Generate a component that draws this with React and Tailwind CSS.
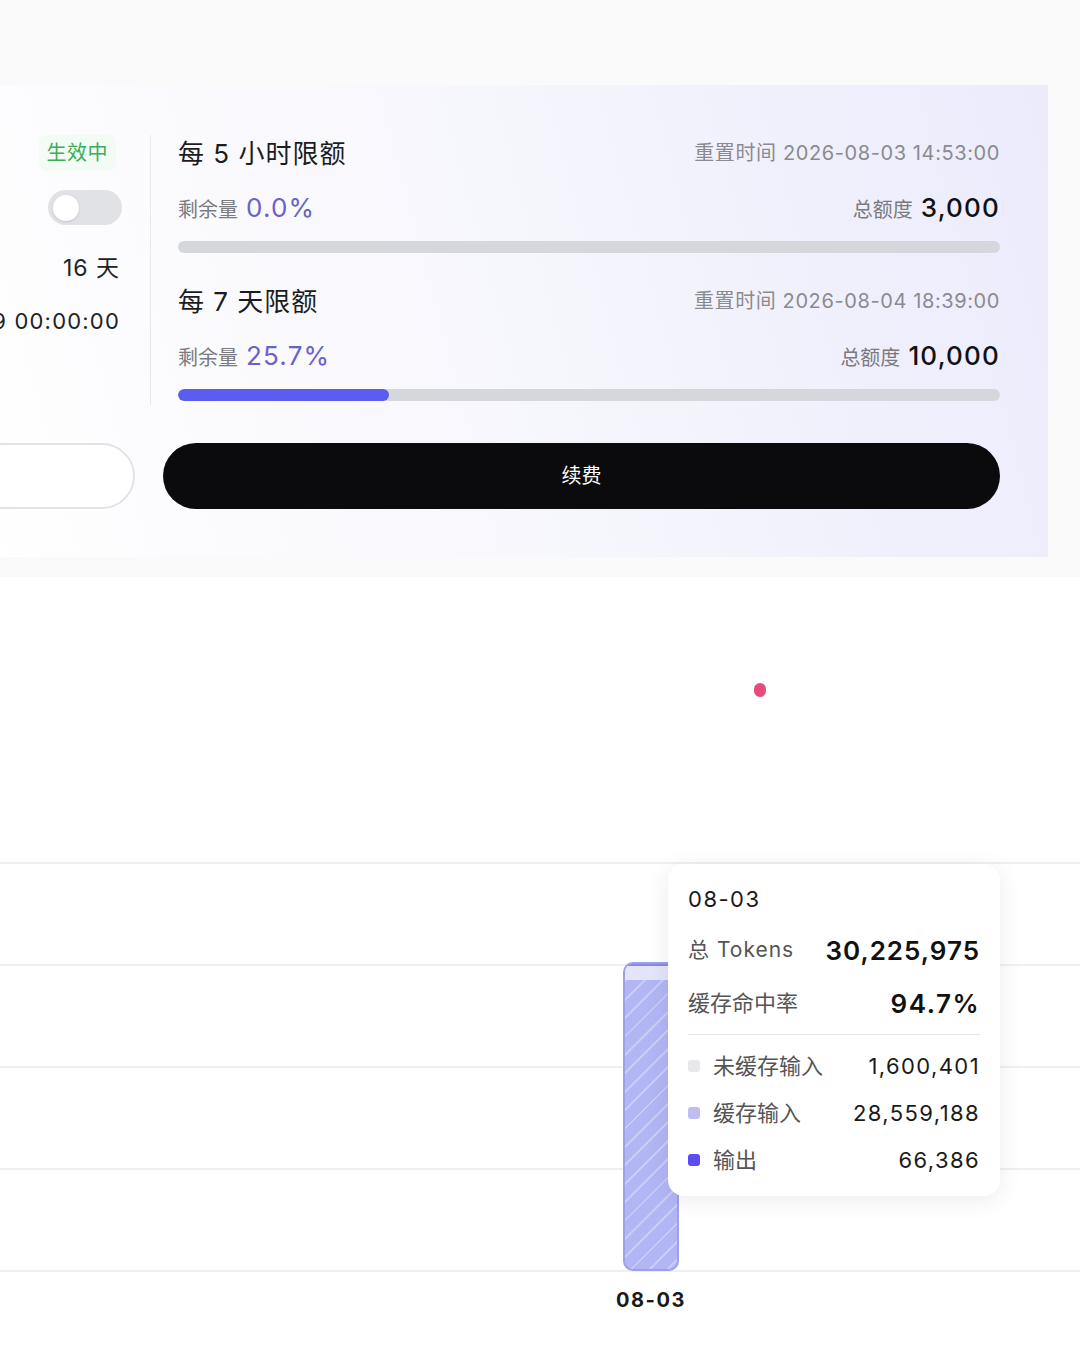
import React from 'react';

const font = { fontFamily: 'Inter, "Noto Sans CJK SC", sans-serif' };

const QuotaBlock = ({ title, resetAt, remain, total, percent, first }) => (
  <div className={first ? '' : 'mt-[30px]'}>
    <div className="flex items-center justify-between h-9">
      <span className="text-[26px] text-[#1c1c1e] tracking-[1px]">{title}</span>
      <span className="text-[20px] text-[#8a8a90] tracking-[0.6px]">重置时间 {resetAt}</span>
    </div>
    <div className="flex items-center justify-between h-9 mt-[18px]">
      <div className="flex items-baseline gap-2">
        <span className="text-[20px] text-[#7a7a80]">剩余量</span>
        <span className="text-[26px] text-[#6a62c6] tracking-[1.2px]">{remain}</span>
      </div>
      <div className="flex items-baseline gap-2">
        <span className="text-[20px] text-[#7a7a80]">总额度</span>
        <span className="text-[26px] font-medium text-[#111] tracking-[1.2px]">{total}</span>
      </div>
    </div>
    <div className="mt-4 h-3 rounded-full bg-[#d5d7dd] overflow-hidden">
      <div className="h-full rounded-full bg-[#5b5cf0]" style={{ width: `${percent}%` }} />
    </div>
  </div>
);

const LegendRow = ({ color, label, value }) => (
  <div className="flex items-center h-[30px]">
    <span className={`w-3 h-3 rounded-[3px] ${color}`} />
    <span className="ml-[13px] text-[22px] text-[#555]">{label}</span>
    <span className="ml-auto text-[22px] tracking-[1.4px] text-[#1a1a1a]">{value}</span>
  </div>
);

export default function App() {
  return (
    <div className="w-[1080px] h-[1353px] overflow-hidden bg-[#fafafa]" style={font}>
      {/* plan card */}
      <div className="pt-[85px]">
        <div className="ml-[-240px] w-[1288px] pl-6 pr-12 pb-12 bg-[linear-gradient(75deg,#ffffff_15%,#f7f7fd_55%,#ebebfc_100%)]">
          <div className="flex pt-[50px]">
            <div className="w-[338px] flex flex-col items-end">
              <span className="h-9 px-2 flex items-center rounded-lg bg-[#f3fbf4] text-[20px] text-[#3aae57] tracking-[0.5px] mr-[6px]">生效中</span>
              <div className="mt-[19px] w-[74px] h-[35px] rounded-full bg-[#e1e2e6] flex items-center px-[5px]">
                <span className="w-[26px] h-[26px] rounded-full bg-white shadow-sm" />
              </div>
              <span className="mt-[28px] h-[30px] flex items-center text-[23px] text-[#222] tracking-[1px] mr-[2px]">16 天</span>
              <span className="mt-[23px] h-[30px] flex items-center text-[22px] text-[#222] tracking-[1.2px] mr-[2px]">2026-08-19 00:00:00</span>
            </div>
            <div className="ml-7 w-px bg-[#e8e8ee] mb-[-4px]" />
            <div className="ml-[27px] w-[822px]">
              <QuotaBlock first title="每 5 小时限额" resetAt="2026-08-03 14:53:00" remain="0.0%" total="3,000" percent={0} />
              <QuotaBlock title="每 7 天限额" resetAt="2026-08-04 18:39:00" remain="25.7%" total="10,000" percent={25.7} />
            </div>
          </div>
          <div className="flex gap-7 mt-[42px]">
            <button className="w-[351px] h-[66px] rounded-full border-2 border-[#e4e4e8] bg-white text-[20px] text-[#222]">升级</button>
            <button className="flex-1 h-[66px] rounded-full bg-[#0b0b0d] text-[20px] text-white">续费</button>
          </div>
        </div>
      </div>

      {/* usage chart */}
      <div className="mt-5 bg-white h-[776px]">
        <div className="pt-[106px] pl-[754px]">
          <span className="block w-3 h-[14px] rounded-full bg-[#e84a7c]" />
        </div>
        <div className="relative mt-[165px] h-[410px] flex flex-col justify-between">
          <div className="h-[2px] bg-[#efeff1]" />
          <div className="h-[2px] bg-[#efeff1]" />
          <div className="h-[2px] bg-[#efeff1]" />
          <div className="h-[2px] bg-[#efeff1]" />
          <div className="h-[2px] bg-[#efeff1]" />

          <div className="absolute left-[623px] bottom-[1px] w-14 h-[309px] rounded-[10px] border-2 border-[#9ea0e8] bg-[#b3b6f5] overflow-hidden flex flex-col">
            <div className="h-[2px] bg-[#6f66e6] opacity-60" />
            <div className="h-[14px] bg-[#e4e5fb]" />
            <div className="flex-1 bg-[repeating-linear-gradient(135deg,rgba(255,255,255,0.3)_0_2px,transparent_2px_13px)]" />
          </div>

          <div className="absolute left-[668px] top-[2px] w-[332px] rounded-2xl bg-white shadow-[0_4px_24px_rgba(0,0,0,0.08)] px-5 pt-[21px] pb-[21px]">
            <div className="h-7 flex items-center text-[22px] text-[#1a1a1a] tracking-[1.5px]">08-03</div>
            <div className="mt-[19px] h-9 flex items-center justify-between">
              <span className="text-[21px] text-[#555] tracking-[1px]">总 Tokens</span>
              <span className="text-[26px] font-semibold text-[#111] tracking-[1px]">30,225,975</span>
            </div>
            <div className="mt-[17px] h-9 flex items-center justify-between">
              <span className="text-[22px] text-[#555]">缓存命中率</span>
              <span className="text-[26px] font-semibold text-[#111] tracking-[1.5px]">94.7%</span>
            </div>
            <div className="mt-[13px] h-px bg-[#e6e6ea]" />
            <div className="mt-[16px] flex flex-col gap-[17px]">
              <LegendRow color="bg-[#e8e8ec]" label="未缓存输入" value="1,600,401" />
              <LegendRow color="bg-[#bfbdf2]" label="缓存输入" value="28,559,188" />
              <LegendRow color="bg-[#5a4ef0]" label="输出" value="66,386" />
            </div>
          </div>
        </div>
        <div className="mt-[13px] pl-[611px]">
          <span className="block w-20 h-7 text-center text-[20px] font-bold text-[#1a1a1a] tracking-[1.5px]">08-03</span>
        </div>
      </div>
    </div>
  );
}
